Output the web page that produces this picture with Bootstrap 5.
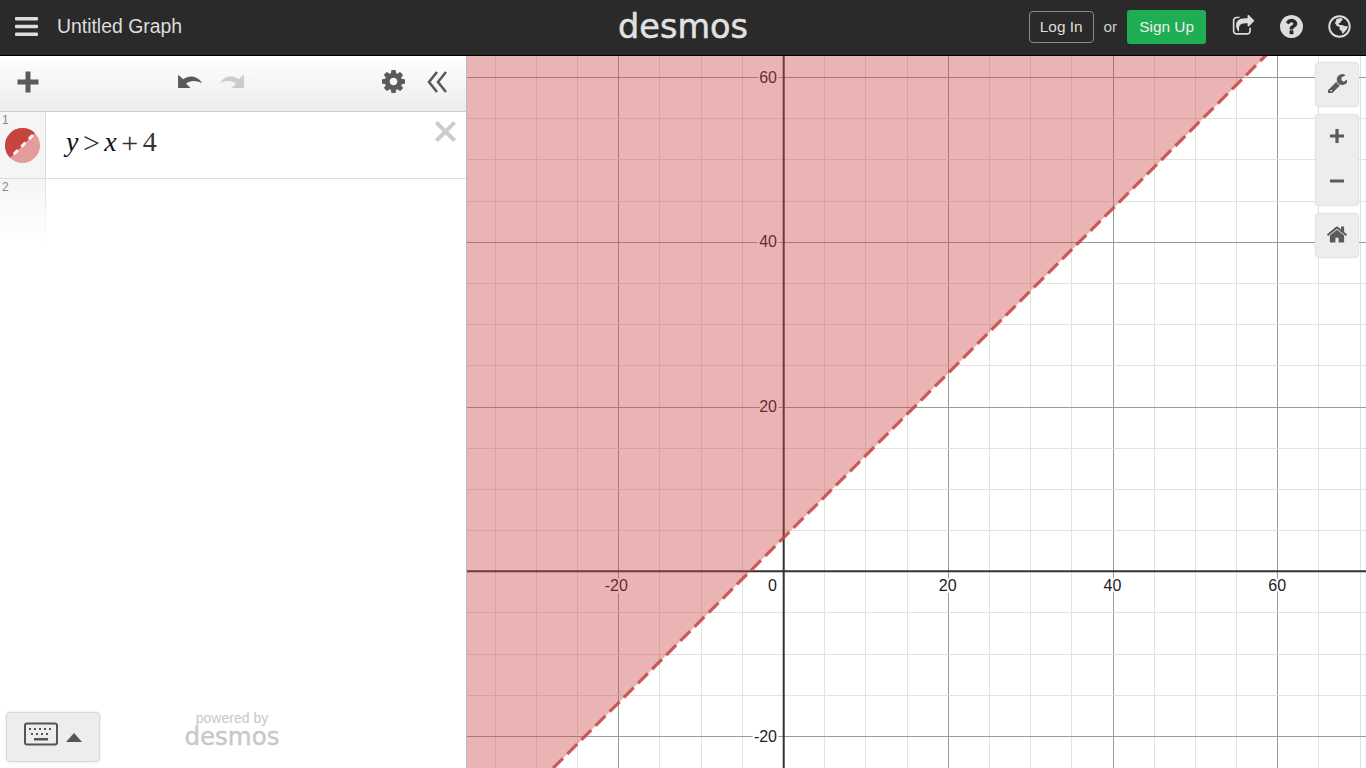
<!DOCTYPE html>
<html lang="en">
  <head>
    <meta charset="UTF-8" />
    <title>Untitled Graph</title>
    <link href="https://cdn.jsdelivr.net/npm/bootstrap@5.3.3/dist/css/bootstrap.min.css" rel="stylesheet" />
    <style>
      html, body { height: 100%; overflow: hidden; }
      body { font-family: "Liberation Sans", Arial, sans-serif; background: #fff; }
      .app-shell { height: 768px; }
      .top-bar { height: 56px; background: #2a2a2a; border-bottom: 1px solid #000; color: #ddd; padding: 0 0 2px; flex-wrap: nowrap; }
      .menu-icon { width: 23px; height: 21px; margin-left: 15px; margin-right: 19px; fill: #ddd; }
      .graph-title { font-size: 19.4px; color: #ddd; }
      .top-left { flex: 1 1 0; }
      .logo-word { font-family: "DejaVu Sans", sans-serif; font-size: 33.5px; line-height: 1; color: #e2e2e2; -webkit-text-stroke: .5px #e2e2e2; }
      .top-right { flex: 1 1 0; }
      .btn-login { font-size: 15.4px; color: #ddd; border: 1px solid #8a8a8a; border-radius: 4px; padding: 4px 10px; height: 32px; line-height: 22px; background: transparent; }
      .btn-signup { font-size: 15.4px; color: #eee; background: #1fae54; border: 0; border-radius: 3px; padding: 5px 12px; height: 34px; line-height: 24px; margin-right: 26px; }
      .or-word { font-size: 15.4px; color: #ccc; margin: 0 10px; }
      .top-icon { width: 23px; height: 23px; fill: #ddd; }
      .icon-gap { margin-right: 25px; }
      .icon-last { margin-right: 15px; }
      .side-panel { width: 467px; border-right: 1px solid #bbb; flex: none; }
      .tool-bar { height: 56px; background: linear-gradient(#fff, #ececec); border-bottom: 1px solid #ccc; padding-bottom: 4px; }
      .tool-icon { fill: #5a5a5a; }
      .tool-icon.off { fill: #ccc; }
      .undo-gap { margin-left: 137px; margin-bottom: 2px; }
      .redo-gap { margin-left: 14px; margin-bottom: 2px; }
      .cog-gap { margin-left: 137px; }
      .chev-gap { margin-left: 22px; }
      .row-one { height: 67px; border-bottom: 1px solid #ddd; }
      .row-two { height: 62px; }
      .row-gutter { width: 46px; flex: none; background: #f5f5f5; border-right: 1px solid #ddd; font-size: 12px; color: #888; line-height: 14px; padding-left: 2px; padding-top: 1px; }
      .row-two .row-gutter { background: linear-gradient(#f5f5f5, #fff); border-image: linear-gradient(#ddd, #fff) 1; }
      .colour-dot { width: 35px; height: 35px; margin: 1px 0 0 3px; display: block; }
      .math-text { font-family: "Liberation Serif", "Times New Roman", serif; font-size: 28px; color: #111; padding: 0 0 6px 20px; white-space: nowrap; }
      .math-op { margin: 0 4.5px; font-size: 30px; font-weight: 400; color: #333; }
      .math-num { color: #333; }
      .close-x { right: 9px; top: 8px; fill: #ccc; }
      .side-foot { padding: 0 0 6px 6px; }
      .key-btn { width: 94px; height: 50px; background: #ededed; border: 1px solid #d8d8d8; border-radius: 4px; box-shadow: 0 0 3px rgba(0,0,0,.12); padding: 0 0 6px; }
      .key-tri { margin-top: 8px; }
      .powered-box { margin-left: 84px; text-align: center; color: #c8c8c8; width: 96px; }
      .powered-line { font-size: 14px; line-height: 13px; }
      .powered-logo { font-family: "DejaVu Sans", sans-serif; font-size: 24.5px; line-height: 24px; -webkit-text-stroke: .4px #c8c8c8; }
      .graph-pane { position: relative; flex: 1; overflow: hidden; }
      .graph-pane svg.plot { display: block; width: 899px; height: 712px; }
      .plot-label { font: 16px "Liberation Sans", Arial, sans-serif; fill: #1c1c1c; stroke: #fff; stroke-width: 4px; paint-order: stroke; }
      .zoom-tools { position: absolute; right: 7px; top: 6px; }
      .zoom-group { width: 44px; background: #ededed; border: 1px solid #e2e2e2; border-radius: 4px; box-shadow: 0 0 2px rgba(0,0,0,.08); margin-bottom: 7px; }
      .zoom-cell { height: 45px; padding-bottom: 3px; }
      .zoom-solo { height: 43px; padding-bottom: 3px; }
    </style>
  </head>
  <body>
    <div class="app-shell d-flex flex-column">
      <nav class="top-bar navbar">
        <div class="top-left d-flex align-items-center">
          <svg class="menu-icon" viewBox="0 0 23 21"><rect width="23" height="3.4" y="1" rx="1"/><rect width="23" height="3.4" y="8.8" rx="1"/><rect width="23" height="3.4" y="16.6" rx="1"/></svg>
          <span class="graph-title">Untitled Graph</span>
        </div>
        <span class="logo-word">desmos</span>
        <div class="top-right d-flex align-items-center justify-content-end">
          <button class="btn btn-login" type="button">Log In</button>
          <span class="or-word">or</span>
          <button class="btn btn-signup" type="button">Sign Up</button>
          <svg class="top-icon icon-gap" viewBox="0 0 1792 1792"><path d="M1472 989v259q0 119-84.5 203.5t-203.5 84.5h-832q-119 0-203.5-84.5t-84.5-203.5v-832q0-119 84.5-203.5t203.5-84.5h255q13 0 22.5 9.5t9.5 22.5q0 27-26 32-77 26-133 60-10 4-16 4h-112q-66 0-113 47t-47 113v832q0 66 47 113t113 47h832q66 0 113-47t47-113v-214q0-19 18-29 28-13 54-37 16-16 35-8 21 9 21 29zm237-496l-384 384q-18 19-45 19-12 0-25-5-39-17-39-59v-192h-160q-323 0-438 131-119 137-74 473 3 23-20 34-8 2-12 2-16 0-26-13-10-14-21-31t-39.5-68.5-49.5-99.5-38.5-114-17.5-122q0-49 3.5-91t14-90 28-88 47-81.5 68.5-74 94.5-61.5 124.5-48.5 159.5-30.5 196.5-11h160v-192q0-42 39-59 13-5 25-5 26 0 45 19l384 384q19 19 19 45t-19 45z"/></svg>
          <svg class="top-icon icon-gap" viewBox="128 128 1536 1536"><path d="M1024 1376v-192q0-14-9-23t-23-9h-192q-14 0-23 9t-9 23v192q0 14 9 23t23 9h192q14 0 23-9t9-23zm256-672q0-88-55.5-163t-138.5-116-170-41q-243 0-371 213-15 24 8 42l132 100q7 6 19 6 16 0 25-12 53-68 86-92 34-24 86-24 48 0 85.5 26t37.5 59q0 38-20 61t-68 45q-63 28-115.5 86.5t-52.5 125.5v36q0 14 9 23t23 9h192q14 0 23-9t9-23q0-19 21.5-49.5t54.5-49.5q32-18 49-28.5t46-35 44.5-48 28-60.5 12.5-81zm384 192q0 209-103 385.5t-279.5 279.5-385.5 103-385.5-103-279.5-279.5-103-385.5 103-385.5 279.5-279.5 385.5-103 385.5 103 279.5 279.5 103 385.5z"/></svg>
          <svg class="top-icon icon-last" viewBox="0 0 24 24"><circle cx="12" cy="12" r="10.700" fill="none" stroke="#ddd" stroke-width="2"/><path d="M9 4l5-.8 1.500 1.800-2 1.400-.5 1.700-2 .6.500 1.600 3.800.3 3.500 1.500 1.200-1 .8.700-1.200 3.400-3 3.400-1.700 1-.6-2.800-2.300-1.600.3-2.600-3-1.200-2-2.800 1-2.500z"/></svg>
        </div>
      </nav>
      <div class="d-flex flex-grow-1">
        <aside class="side-panel d-flex flex-column">
          <div class="tool-bar d-flex align-items-center">
            <svg class="tool-icon ms-3" width="24" height="24" viewBox="0 0 24 24"><path d="M9.500 1.500h5v8h8v5h-8v8h-5v-8h-8v-5h8z"/></svg>
            <svg class="tool-icon undo-gap" width="27" height="16" viewBox="0 0 28 18"><path d="M0 2v15h14l-5-5c4-3.500 11-4 18-.5C23 4 13 1.500 6 7z"/></svg>
            <svg class="tool-icon off redo-gap" width="27" height="16" viewBox="0 0 28 18"><path d="M28 2v15H14l5-5C15 8.500 8 8 1 11.500 5 4 15 1.500 22 7z"/></svg>
            <svg class="tool-icon cog-gap" width="23" height="23" viewBox="128 128 1536 1536"><path d="M1152 896q0-106-75-181t-181-75-181 75-75 181 75 181 181 75 181-75 75-181zm512-109v222q0 12-8 23t-20 13l-185 28q-19 54-39 91 35 50 107 138 10 12 10 25t-9 23q-27 37-99 108t-94 71q-12 0-26-9l-138-108q-44 23-91 38-16 136-29 186-7 28-36 28h-222q-14 0-24.5-8.5t-11.5-21.5l-28-184q-49-16-90-37l-141 107q-10 9-25 9-14 0-25-11-126-114-165-168-7-10-7-23 0-12 8-23 15-21 51-66.5t54-70.5q-27-50-41-99l-183-27q-13-2-21-12.5t-8-23.5v-222q0-12 8-23t19-13l186-28q14-46 39-92-40-57-107-138-10-12-10-24 0-10 9-23 26-36 98.5-107.5t94.5-71.5q13 0 26 10l138 107q44-23 91-38 16-136 29-186 7-28 36-28h222q14 0 24.5 8.5t11.5 21.5l28 184q49 16 90 37l142-107q9-9 24-9 13 0 25 10 129 119 165 170 7 8 7 22 0 12-8 23-15 21-51 66.5t-54 70.5q26 50 41 98l183 28q13 2 21 12.5t8 23.5z"/></svg>
            <svg class="chev-gap" width="20" height="22" viewBox="0 0 20 22"><path d="M10 1L2 11l8 10M19 1l-8 10 8 10" fill="none" stroke="#5a5a5a" stroke-width="2.600"/></svg>
          </div>
          <div class="row-one d-flex position-relative">
            <div class="row-gutter">1
              <svg class="colour-dot" viewBox="0 0 36 36">
                <defs><clipPath id="dotclip"><circle cx="18" cy="18" r="18"/></clipPath></defs>
                <g clip-path="url(#dotclip)">
                  <rect width="36" height="36" fill="#e39d9c"/>
                  <path d="M0 0h36L0 36z" fill="#c74440"/>
                  <path d="M9 27L30 6" stroke="#fff" stroke-width="3" stroke-dasharray="6 5" opacity=".9"/>
                </g>
              </svg>
            </div>
            <div class="math-text d-flex align-items-center"><i>y</i><span class="math-op">&gt;</span><i>x</i><span class="math-op">+</span><span class="math-num">4</span></div>
            <svg class="close-x position-absolute" width="23" height="23" viewBox="0 0 24 24"><path d="M4 1l8 8 8-8 3 3-8 8 8 8-3 3-8-8-8 8-3-3 8-8-8-8z"/></svg>
          </div>
          <div class="row-two d-flex"><div class="row-gutter">2</div></div>
          <div class="side-foot mt-auto d-flex align-items-start">
            <button class="key-btn d-flex align-items-center justify-content-center" type="button">
              <svg width="34" height="24" viewBox="0 0 34 24"><rect x="1" y="1.500" width="32" height="21" rx="2" fill="none" stroke="#555" stroke-width="2"/><path d="M5 6h2v2H5zm5 0h2v2h-2zm5 0h2v2h-2zm5 0h2v2h-2zm5 0h2v2h-2zM7 11h2v2H7zm5 0h2v2h-2zm5 0h2v2h-2zm5 0h2v2h-2zM10 16h14v2.500H10z" fill="#555"/></svg>
              <svg class="ms-2 key-tri" width="16" height="10" viewBox="0 0 16 10"><path d="M8 0l8 9H0z" fill="#555"/></svg>
            </button>
            <div class="powered-box"><div class="powered-line">powered by</div><div class="powered-logo">desmos</div></div>
          </div>
        </aside>
        <main class="graph-pane">
          <svg class="plot" id="plot" viewBox="0 0 899 712"></svg>
          <div class="zoom-tools">
            <div class="zoom-group d-flex flex-column">
              <div class="zoom-solo d-flex align-items-center justify-content-center"><svg width="19" height="19" viewBox="128 128 1536 1536" fill="#5a5a5a"><path d="M448 1472q0-26-19-45t-45-19-45 19-19 45 19 45 45 19 45-19 19-45zm644-420l-682 682q-37 37-90 37-52 0-91-37l-106-108q-38-36-38-90 0-53 38-91l681-681q39 98 114.5 173.5t173.5 114.5zm634-435q0 39-23 106-47 134-164.5 217.5t-258.5 83.5q-185 0-316.5-131.5t-131.5-316.5 131.5-316.5 316.5-131.5q58 0 121.5 16.5t107.5 46.5q16 11 16 28t-16 28l-293 169v224l193 107q5-3 79-48.5t135.5-81 70.5-35.5q15 0 23.5 10t8.5 25z"/></svg></div>
            </div>
            <div class="zoom-group d-flex flex-column">
              <div class="zoom-cell d-flex align-items-center justify-content-center"><svg width="16" height="16" viewBox="0 0 16 16" fill="#5a5a5a"><path d="M6.400 1h3.200v5.400H15v3.200H9.600V15H6.400V9.600H1V6.400h5.400z"/></svg></div>
              <div class="zoom-cell d-flex align-items-center justify-content-center"><svg width="16" height="16" viewBox="0 0 16 16" fill="#5a5a5a"><path d="M1 6.500h14v3H1z"/></svg></div>
            </div>
            <div class="zoom-group d-flex flex-column">
              <div class="zoom-solo d-flex align-items-center justify-content-center"><svg width="20" height="19" viewBox="96 128 1600 1536" fill="#5a5a5a"><path d="M1472 992v480q0 26-19 45t-45 19h-384v-384h-256v384h-384q-26 0-45-19t-19-45v-480q0-1 .5-3t.5-3l575-474 575 474q1 2 1 6zm223-69l-62 74q-8 9-21 11h-3q-13 0-21-7l-692-577-692 577q-12 8-24 7-13-2-21-11l-62-74q-8-10-7-23.5t11-21.5l719-599q32-26 76-26t76 26l244 204v-195q0-14 9-23t23-9h192q14 0 23 9t9 23v408l219 182q10 8 11 21.5t-7 23.5z"/></svg></div>
            </div>
          </div>
        </main>
      </div>
    </div>
    <script>
      // grid: about 8.237px per unit, origin inside the svg
      const X0 = 316, Y0 = 515.3, S = 8.2375, W = 899, H = 712;
      const sx = (v) => X0 + v * S;
      const sy = (v) => Y0 - v * S;
      const snap = (n) => Math.round(n) + 0.5;
      let out = "";
      const line = (x1, y1, x2, y2, c, w) =>
        `<line x1="${x1}" y1="${y1}" x2="${x2}" y2="${y2}" stroke="${c}" stroke-width="${w}"/>`;
      for (let v = -40; v <= 70; v += 5) {
        if (v === 0) continue;
        const c = v % 20 === 0 ? "#9a9a9a" : "#e2e2e2";
        out += line(snap(sx(v)), 0, snap(sx(v)), H, c, 1);
      }
      for (let v = -25; v <= 65; v += 5) {
        if (v === 0) continue;
        const c = v % 20 === 0 ? "#9a9a9a" : "#e2e2e2";
        out += line(0, snap(sy(v)), W, snap(sy(v)), c, 1);
      }
      out += line(X0 + 0.7, 0, X0 + 0.7, H, "#333", 2);
      out += line(0, Y0, W, Y0, "#333", 2);
      const label = (t, x, y, a) =>
        `<text class="plot-label" x="${x}" y="${y}" text-anchor="${a}">${t}</text>`;
      [-20, 20, 40, 60].forEach((v) => {
        out += label(v, sx(v) - (v < 0 ? 2 : 0), sy(0) + 19.5, "middle");
      });
      out += label(0, sx(0) - 6, sy(0) + 19.5, "end");
      [20, 40, 60].forEach((v) => {
        out += label(v, sx(0) - 6, sy(v) + 5.5, "end");
      });
      out += label(-20, sx(0) - 6, sy(-20) + 5.5, "end");
      // y > x + 4, shade goes over grid and labels
      const pts = `0,0 ${sx(62.6 - 4)},0 ${sx(-70 - 4)},${sy(-70)} 0,${sy(-70)}`;
      out += `<polygon points="${pts}" fill="#c74440" fill-opacity=".4"/>`;
      out += `<line x1="${sx(66)}" y1="${sy(70)}" x2="${sx(-74)}" y2="${sy(-70)}" stroke="#c74440" stroke-width="3.2" stroke-dasharray="14 6" stroke-opacity=".85"/>`;
      document.getElementById("plot").innerHTML = out;
    </script>
  </body>
</html>
